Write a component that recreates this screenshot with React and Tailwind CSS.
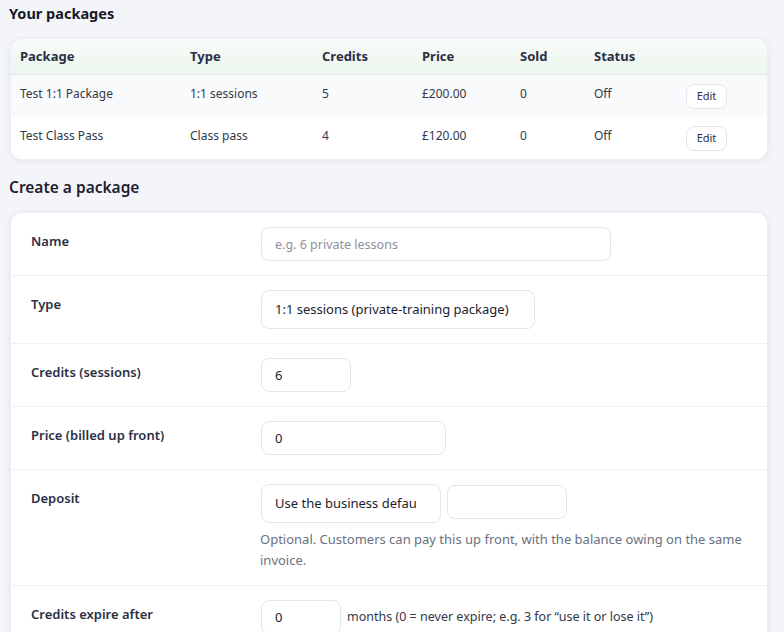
import React from "react";

const rows = [
  { name: "Test 1:1 Package", type: "1:1 sessions", credits: "5", price: "£200.00", sold: "0", status: "Off", bg: "bg-[#f9fafc]" },
  { name: "Test Class Pass", type: "Class pass", credits: "4", price: "£120.00", sold: "0", status: "Off", bg: "bg-white" },
];

const cols = "grid grid-cols-[170px_132px_100px_98px_74px_92px_1fr]";

function Label({ children }) {
  return <div className="pt-[5px] text-[13px] leading-[18px] font-semibold text-[#2b2f45]">{children}</div>;
}

function Input({ w, value, placeholder }) {
  return (
    <input
      readOnly
      value={value}
      placeholder={placeholder}
      className={`${w} h-[34px] rounded-lg border border-[#e4e6ee] bg-white px-[13px] text-[13px] text-[#1c1d2e] placeholder:text-[#8d919e] placeholder:text-[12.5px] outline-none`}
    />
  );
}

function Select({ w, text }) {
  return (
    <div className={`${w} h-[39px] rounded-lg border border-[#e4e6ee] bg-white pl-[13px] pr-[24px] flex items-center text-[13px] text-[#1c1d2e]`}>
      <div className="overflow-hidden whitespace-nowrap">{text}</div>
    </div>
  );
}

function Row({ label, children, last }) {
  return (
    <div className={`grid grid-cols-[230px_1fr] px-[20px] py-[14px] ${last ? "" : "border-b border-[#eef0f4]"}`}>
      <Label>{label}</Label>
      <div>{children}</div>
    </div>
  );
}

export default function App() {
  return (
    <div className="min-h-[632px] bg-[#f4f5f9] pl-[10px] pr-[16px] pt-[3px] text-[#2b2f45]" style={{ fontFamily: '"Noto Sans", "Open Sans", sans-serif' }}>
      <h2 className="text-[14.5px] leading-[20px] font-bold text-[#161827] -ml-[1px]">Your packages</h2>

      <div className="mt-[15px] rounded-xl bg-white shadow-[0_1px_6px_rgba(30,40,60,0.08)] border border-[#eceef3] overflow-hidden">
        <div className={`${cols} h-[36px] pl-[9px] bg-gradient-to-b from-[#f8fbfa] to-[#ecf6ee] border-b border-[#e3eae5] text-[13px] font-bold text-[#2b2f45]`}>
          {["Package", "Type", "Credits", "Price", "Sold", "Status", ""].map((h, i) => (
            <div key={i} className="pt-[8px] leading-[18px]">{h}</div>
          ))}
        </div>
        {rows.map((r, i) => (
          <div key={i} className={`${cols} h-[42px] pl-[9px] ${r.bg} text-[12px] text-[#333849]`}>
            <div className="pt-[10px] leading-[18px]">{r.name}</div>
            <div className="pt-[10px] leading-[18px]">{r.type}</div>
            <div className="pt-[10px] leading-[18px]">{r.credits}</div>
            <div className="pt-[10px] leading-[18px]">{r.price}</div>
            <div className="pt-[10px] leading-[18px]">{r.sold}</div>
            <div className="pt-[10px] leading-[18px]">{r.status}</div>
            <div className="pt-[9px]">
              <button className="w-[41px] h-[25px] rounded-lg border border-[#e4e6ee] bg-white text-[11px] text-[#2b2f45] flex items-center justify-center">Edit</button>
            </div>
          </div>
        ))}
      </div>

      <h2 className="mt-[15px] text-[15.5px] leading-[24px] font-semibold text-[#1f2133] -ml-[1px]">Create a package</h2>

      <div className="mt-[13px] rounded-xl bg-white shadow-[0_1px_6px_rgba(30,40,60,0.08)] border border-[#eceef3] overflow-hidden">
        <Row label="Name">
          <Input w="w-[350px]" value="" placeholder="e.g. 6 private lessons" />
        </Row>
        <Row label="Type">
          <Select w="w-[274px]" text="1:1 sessions (private-training package)" />
        </Row>
        <Row label="Credits (sessions)">
          <Input w="w-[90px]" value="6" />
        </Row>
        <Row label="Price (billed up front)">
          <Input w="w-[185px]" value="0" />
        </Row>
        <div className="grid grid-cols-[230px_1fr] px-[20px] pt-[14px] pb-[14px] border-b border-[#eef0f4]">
          <Label>Deposit</Label>
          <div>
            <div className="flex items-start gap-[6px]">
              <Select w="w-[180px]" text="Use the business default" />
              <div className="mt-[1px]">
                <Input w="w-[120px]" value="" />
              </div>
            </div>
            <p className="mt-[6px] text-[13px] leading-[21px] text-[#6b7080] -ml-[1px]">
              Optional. Customers can pay this up front, with the balance owing on the same invoice.
            </p>
          </div>
        </div>
        <Row label="Credits expire after" last>
          <div className="flex items-center gap-[6px]">
            <Input w="w-[80px]" value="0" />
            <span className="text-[12.5px] text-[#333849]">months (0 = never expire; e.g. 3 for “use it or lose it”)</span>
          </div>
        </Row>
      </div>
    </div>
  );
}
